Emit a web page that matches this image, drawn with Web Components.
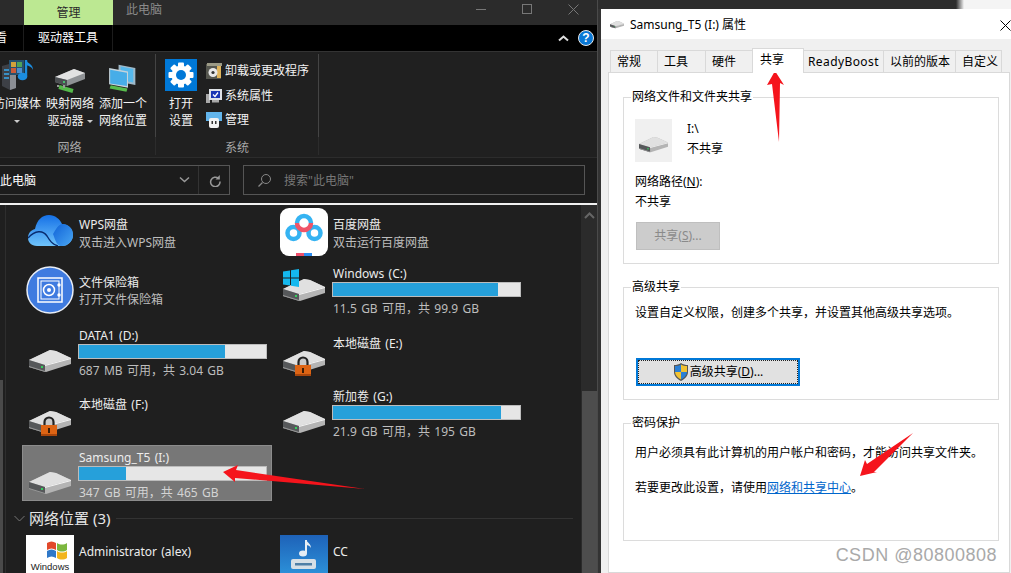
<!DOCTYPE html>
<html lang="zh">
<head>
<meta charset="utf-8">
<title>Samsung_T5 属性</title>
<style>
  html, body { margin: 0; height: 573px; overflow: hidden; background: #2d2d2d; }
  body { display: flex; font: 12px/16px "Noto Sans", "Noto Sans CJK SC", sans-serif; position: relative; }
  svg { display: block; }
</style>
</head>
<body>

<explorer-window>
  <ribbon-group slot="ribbon" label="网络" shift="-12" width="168" pad="5" label-shift="-2">
    <ribbon-btn>
      <svg slot="icon" width="34" height="34" viewBox="0 0 34 34">
        <path d="M2 7l14-4v26l-6 2-8-4z" fill="#3d4046"/><path d="M10 6l6-3v26l-6 2z" fill="#8b8e94"/>
        <path d="M4 11h5M4 15h5M4 19h5" stroke="#38a9ee" stroke-width="1.4"/>
        <rect x="9" y="1" width="15" height="15" fill="#27506e"/><rect x="11" y="3" width="5" height="5" fill="#d2a13b"/><rect x="17" y="3" width="5" height="5" fill="#4fa35b"/><rect x="11" y="9" width="5" height="5" fill="#c95a3a"/><rect x="17" y="9" width="5" height="5" fill="#4d8fce"/>
        <path d="M26 1v16" stroke="#1b8de0" stroke-width="2.4"/><path d="M26 1c2 4 7 4 7 10-1-3-4-4-7-5z" fill="#1b8de0"/><ellipse cx="22.5" cy="17.5" rx="4.8" ry="3.8" fill="#1b8de0"/>
      </svg>
      访问媒体<br><small-caret></small-caret>
    </ribbon-btn>
    <ribbon-btn>
      <svg slot="icon" width="34" height="34" viewBox="0 0 34 34">
        <g transform="translate(0 3)">
          <path d="M2 15L21 7l11 4v6L14 24 2 20z" fill="#8f9295"/><path d="M2 15L21 7l11 4-18 7z" fill="#e2e2e2"/><path d="M2 15l12 3v6L2 20z" fill="#4c4f52"/>
          <circle cx="11" cy="20" r="1" fill="#49e07a"/>
          <path d="M6 25l14 4" stroke="#55b94a" stroke-width="4"/><path d="M11 23v3M5 23v2" stroke="#999" stroke-width="2"/>
        </g>
      </svg>
      映射网络<br>驱动器 <small-caret></small-caret>
    </ribbon-btn>
    <ribbon-btn>
      <svg slot="icon" width="34" height="34" viewBox="0 0 34 34">
        <g transform="translate(1 4) scale(1.05 .85)">
          <path d="M11 2l16 4v20l-16-4z" fill="#9fb9c9"/><path d="M13 4l12 3v16l-12-3z" fill="#55b8ec"/>
          <path d="M2 6l18 4v19L2 25z" fill="#c5d3db"/><path d="M3 8l16 3.500v15.500L3 24z" fill="#47ade8"/>
          <path d="M3 28l16 4" stroke="#58bb4d" stroke-width="4"/>
        </g>
      </svg>
      添加一个<br>网络位置
    </ribbon-btn>
  </ribbon-group>

  <ribbon-group slot="ribbon" label="系统" width="163" pad="9">
    <ribbon-btn width="32">
      <svg slot="icon" width="32" height="32" viewBox="0 0 32 32">
        <rect width="32" height="32" fill="#0078d7"/>
        <g fill="#fff">
          <rect x="13" y="3.500" width="6" height="25" rx="1"/>
          <rect x="13" y="3.500" width="6" height="25" rx="1" transform="rotate(45 16 16)"/>
          <rect x="13" y="3.500" width="6" height="25" rx="1" transform="rotate(90 16 16)"/>
          <rect x="13" y="3.500" width="6" height="25" rx="1" transform="rotate(135 16 16)"/>
          <circle cx="16" cy="16" r="9.500"/>
        </g>
        <circle cx="16" cy="16" r="5" fill="#0078d7"/>
      </svg>
      打开<br>设置
    </ribbon-btn>
    <ribbon-list>
      <ribbon-small>
        <svg slot="icon" width="16" height="16" viewBox="0 0 16 16"><rect y="1" width="15" height="15" fill="#56574f"/><rect x="1" width="15" height="3" fill="#9c9a86"/><rect x="11" y="3" width="4" height="12" fill="#e0b45c"/><circle cx="7" cy="9.500" r="4.500" fill="#e8e8e8"/><circle cx="7" cy="9.500" r="1.600" fill="#333"/></svg>
        卸载或更改程序
      </ribbon-small>
      <ribbon-small>
        <svg slot="icon" width="16" height="16" viewBox="0 0 16 16"><rect x="0" y="6" width="4" height="9" fill="#a9a9a9"/><rect x="3" y="1" width="13" height="11" fill="#dfe3e8"/><rect x="5" y="3" width="9" height="7" fill="#1a36b4"/><path d="M7 6.500l2 2 3-4" stroke="#fff" stroke-width="1.300" fill="none"/><rect x="6" y="12" width="7" height="2.500" fill="#a9a9a9"/></svg>
        系统属性
      </ribbon-small>
      <ribbon-small>
        <svg slot="icon" width="16" height="16" viewBox="0 0 16 16"><rect width="16" height="9" fill="#62b5ec"/><rect x="3" y="6" width="10" height="10" rx="2" fill="#f2f2f2"/><rect x="5.500" y="9" width="1.500" height="3" fill="#333"/><rect x="9" y="9" width="1.500" height="3" fill="#333"/></svg>
        管理
      </ribbon-small>
    </ribbon-list>
  </ribbon-group>

  <tile-column slot="col1">
    <drive-tile name="WPS网盘" info="双击进入WPS网盘" h="59" text-top="10" icon-top="10">
      <svg slot="icon" width="45" height="31" viewBox="0 0 45 31" style="margin-left:2px">
        <defs><linearGradient id="c1" x1="0" y1="0" x2="0" y2="1"><stop offset="0" stop-color="#1570e6"/><stop offset="1" stop-color="#6fc4fb"/></linearGradient>
        <linearGradient id="c2" x1="0" y1="0" x2="1" y2="1"><stop offset="0" stop-color="#0f62d8"/><stop offset="1" stop-color="#49a6f2"/></linearGradient></defs>
        <path d="M9 31C3 31 0 27 0 23c0-5 3-8 7-9C9 5 14 0 21 0c6 0 11 4 13 9 6 0 11 4 11 11 0 6-5 11-11 11z" fill="url(#c1)"/>
        <path d="M34 9c6 0 11 4 11 11 0 6-5 11-11 11h-2c-4-2-5-7-7-12 3-5 5-9 9-10z" fill="url(#c2)"/>
        <path d="M0 23c7-8 15-8 19-2 3 5 5 8 11 10" stroke="#082b6e" stroke-width="1.400" fill="none"/>
      </svg>
    </drive-tile>
    <drive-tile name="文件保险箱" info="打开文件保险箱" h="59" text-top="9" line-gap="1" icon-top="2">
      <svg slot="icon" width="48" height="48" viewBox="0 0 48 48">
        <circle cx="24" cy="24" r="23" fill="#3f7be0" stroke="#e8edf6" stroke-width="1.500"/>
        <rect x="12" y="12" width="24" height="24" fill="none" stroke="#fff" stroke-width="1.500"/>
        <rect x="15" y="15" width="18" height="18" fill="none" stroke="#fff" stroke-width="1"/>
        <circle cx="23" cy="24" r="5.500" fill="none" stroke="#fff" stroke-width="1.500"/><circle cx="23" cy="24" r="2" fill="#fff"/>
        <circle cx="33" cy="19" r="1.700" fill="#fff"/><circle cx="33" cy="29" r="1.700" fill="#fff"/>
      </svg>
    </drive-tile>
    <drive-tile name="DATA1 (D:)" info="687 MB 可用，共 3.04 GB" used="78" h="69" icon-top="27"><drive-icon slot="icon"></drive-icon></drive-tile>
    <drive-tile name="本地磁盘 (F:)" h="53" icon-top="19"><drive-icon slot="icon" lock></drive-icon></drive-tile>
    <drive-tile name="Samsung_T5 (I:)" info="347 GB 可用，共 465 GB" used="25.300" h="56" icon-top="27" selected><drive-icon slot="icon"></drive-icon></drive-tile>
  </tile-column>

  <tile-column slot="col2">
    <drive-tile name="百度网盘" info="双击运行百度网盘" h="56" text-top="10" icon-top="3">
      <svg slot="icon" width="48" height="48" viewBox="0 0 48 48">
        <rect width="48" height="48" rx="9" fill="#fff"/>
        <g fill="none" stroke-width="4.500">
          <circle cx="13.500" cy="25" r="6" stroke="#35b3f2"/>
          <circle cx="34.500" cy="25" r="6" stroke="#35b3f2"/>
          <path d="M17 15a7 7 0 0 1 14 0" stroke="#35b3f2"/>
          <path d="M17 15a7 7 0 0 0 14 0" stroke="#ef5468"/>
        </g>
        <rect x="16" y="45" width="8" height="3" fill="#ef4f6b"/><rect x="24" y="45" width="8" height="3" fill="#2a8cf0"/>
      </svg>
    </drive-tile>
    <drive-tile name="Windows (C:)" info="11.5 GB 可用，共 99.9 GB" used="88.500" h="70" icon-top="18"><drive-icon slot="icon" windows></drive-icon></drive-tile>
    <drive-tile name="本地磁盘 (E:)" h="53" icon-top="20"><drive-icon slot="icon" lock></drive-icon></drive-tile>
    <drive-tile name="新加卷 (G:)" info="21.9 GB 可用，共 195 GB" used="90" h="56" icon-top="27"><drive-icon slot="icon"></drive-icon></drive-tile>
  </tile-column>

  <section-head slot="section">网络位置 (3)</section-head>

  <drive-tile slot="net1" name="Administrator (alex)" h="48" text-top="7" icon-top="0">
    <media-thumb slot="icon"></media-thumb>
  </drive-tile>
  <drive-tile slot="net2" name="CC" h="48" text-top="7" icon-top="0">
    <svg slot="icon" width="48" height="48" viewBox="0 0 48 48">
      <defs><linearGradient id="cc" x1="0" y1="0" x2="0" y2="1"><stop offset="0" stop-color="#1e62b8"/><stop offset="1" stop-color="#2f9be0"/></linearGradient></defs>
      <rect width="48" height="48" fill="url(#cc)"/>
      <path d="M26 5v13" stroke="#e6eef5" stroke-width="2"/><path d="M26 5c2 3 5 4 5 8-1-2-3-3-5-3z" fill="#e6eef5"/><ellipse cx="23" cy="18.500" rx="4" ry="3" fill="#e6eef5"/>
      <rect x="11" y="24" width="25" height="10" rx="2" fill="#d6dfe6"/><rect x="15" y="28" width="17" height="2.500" fill="#4f7fa6"/>
    </svg>
  </drive-tile>
</explorer-window>

<properties-dialog>
  <group-box legend="网络文件和文件夹共享" h="175">
    <share-state></share-state>
  </group-box>
  <group-box legend="高级共享" h="121">
    <dialog-text top="10">设置自定义权限，创建多个共享，并设置其他高级共享选项。</dialog-text>
    <dialog-button focused top="37" width="164">
      <svg slot="icon" width="16" height="18" viewBox="0 0 16 18"><path d="M8 0c2 1.500 4.500 2 7 2v7c0 4-3 7-7 9-4-2-7-5-7-9V2c2.500 0 5-.5 7-2z" fill="#555"/><path d="M8 1.500V9H2V3c2.200 0 4.200-.5 6-1.500z" fill="#2a7fd5"/><path d="M8 1.500c1.800 1 3.800 1.500 6 1.500v6H8z" fill="#f2c230"/><path d="M2 9h6v7.500C5 15 2.300 12.500 2 9z" fill="#f2c230"/><path d="M8 9h6c-.3 3.500-3 6-6 7.500z" fill="#2a7fd5"/></svg>
      高级共享(<u>D</u>)...
    </dialog-button>
  </group-box>
  <group-box legend="密码保护" h="126">
    <dialog-text top="14">用户必须具有此计算机的用户帐户和密码，才能访问共享文件夹。</dialog-text>
    <dialog-text top="19">若要更改此设置，请使用<a href="#">网络和共享中心</a>。</dialog-text>
  </group-box>
</properties-dialog>

<red-arrows></red-arrows>
<water-mark>CSDN @80800808</water-mark>

<script>
class ExplorerWindow extends HTMLElement {
  connectedCallback() {
    this.attachShadow({ mode: 'open' }).innerHTML = `
      <style>
        :host { display: flex; flex-direction: column; width: 597px; height: 573px; flex: none; background: #1f1f1f; border-right: 1px solid #4a4a4a; overflow: hidden; color: #fff; }
        .title { height: 25px; flex: none; display: flex; background: #2b2b2b; }
        .manage { margin-left: 24px; width: 89px; background: #bce892; color: #2b2b2b; text-align: center; line-height: 25px; }
        .here { margin-left: 13px; color: #8a8a8a; line-height: 20px; flex: 1; }
        .winbtns { display: flex; align-items: flex-start; gap: 35px; margin: 4px 18px 0 0; }
        .tabs { height: 26px; flex: none; display: flex; align-items: center; background: #000; border-bottom: 1px solid #333; }
        .tab { height: 26px; line-height: 26px; border-right: 1px solid #1c1c1c; box-sizing: border-box; }
        .tab.first { margin-left: -17px; width: 41px; }
        .tab.drive { padding-left: 14px; width: 89px; }
        .chev { margin-left: auto; margin-right: 9px; }
        .help { width: 14px; height: 14px; border-radius: 50%; background: #0a78d6; border: 1px solid #e8e8e8; color: #fff; font: bold 12px/14px "Liberation Sans", sans-serif; text-align: center; margin-right: 3px; }
        .ribbon { height: 106px; flex: none; display: flex; background: #202020; border-bottom: 1px solid #2c2c2c; box-sizing: border-box; }
        .addr { height: 45px; flex: none; display: flex; gap: 13px; padding: 7px 12px 8px 0; box-sizing: border-box; background: #1c1c1c; }
        .box { border: 1px solid #555; box-sizing: border-box; height: 30px; display: flex; align-items: center; }
        .box span { padding-top: 2px; }
        .path { width: 231px; margin-left: -1px; padding-right: 8px; }
        .path span { flex: 1; }
        .path i { width: 1px; height: 28px; background: #333; margin: 0 10px 0 8px; }
        .search { flex: 1; color: #777; padding-left: 13px; gap: 12px; }
        .white { height: 2px; flex: none; background: #f0f0f0; }
        .body { flex: 1; display: flex; min-height: 0; background: #1f1f1f; }
        .nav { width: 5px; flex: none; border-right: 1px solid #2e2e2e; padding-top: 175px; box-sizing: content-box; }
        .nav div { width: 3px; height: 200px; background: #4a4a4a; }
        .main { flex: 1; padding-left: 16px; min-width: 0; }
        .cols { display: flex; gap: 4px; }
        .net { display: flex; gap: 4px; margin-top: 8px; }
        .scroll { width: 16px; flex: none; background: #2b2b2b; display: flex; flex-direction: column; align-items: center; }
        .scroll .up { margin-top: 7px; }
        .scroll .thumb { margin-top: 172px; width: 15px; flex: 1; background: #4d4d4d; }
      </style>
      <div class="title">
        <div class="manage">管理</div>
        <div class="here">此电脑</div>
        <div class="winbtns">
          <svg width="11" height="11" viewBox="0 0 11 11"><path d="M0 5.500h10" stroke="#777"/></svg>
          <svg width="11" height="11" viewBox="0 0 11 11"><rect x=".5" y=".5" width="9" height="9" fill="none" stroke="#777"/></svg>
          <svg width="11" height="11" viewBox="0 0 11 11"><path d="M.5.500l10 10M10.500.500l-10 10" stroke="#777"/></svg>
        </div>
      </div>
      <div class="tabs">
        <div class="tab first">查看</div>
        <div class="tab drive">驱动器工具</div>
        <svg class="chev" width="11" height="8" viewBox="0 0 11 8"><path d="M1 6.500l4.500-4 4.500 4" fill="none" stroke="#ddd" stroke-width="2"/></svg>
        <div class="help">?</div>
      </div>
      <div class="ribbon"><slot name="ribbon"></slot></div>
      <div class="addr">
        <div class="box path">
          <span>此电脑</span>
          <svg width="11" height="8" viewBox="0 0 11 8"><path d="M1 1.500l4.500 4 4.500-4" fill="none" stroke="#999" stroke-width="1.500"/></svg>
          <i></i>
          <svg width="12" height="13" viewBox="0 0 12 13"><path d="M9.500 4.500A4.700 4.700 0 1 0 11 7.500" fill="none" stroke="#999" stroke-width="1.500"/><path d="M10.800 1v4.500H6.500z" fill="#999"/></svg>
        </div>
        <div class="box search">
          <svg width="15" height="15" viewBox="0 0 15 15"><circle cx="9" cy="6" r="4.500" fill="none" stroke="#888"/><path d="M5.500 9.500l-4 4" stroke="#888" stroke-width="1.300"/></svg>
          <span>搜索"此电脑"</span>
        </div>
      </div>
      <div class="white"></div>
      <div class="body">
        <div class="nav"><div></div></div>
        <div class="main">
          <div class="cols"><slot name="col1"></slot><slot name="col2"></slot></div>
          <slot name="section"></slot>
          <div class="net"><slot name="net1"></slot><slot name="net2"></slot></div>
        </div>
        <div class="scroll">
          <svg class="up" width="11" height="7" viewBox="0 0 11 7"><path d="M1 6l4.500-4.500L10 6" fill="none" stroke="#666" stroke-width="2"/></svg>
          <div class="thumb"></div>
        </div>
      </div>`;
  }
}

class RibbonGroup extends HTMLElement {
  connectedCallback() {
    const shift = this.getAttribute('shift') || 0;
    const pad = this.getAttribute('pad') || 0;
    const labelShift = this.getAttribute('label-shift') || 0;
    this.attachShadow({ mode: 'open' }).innerHTML = `
      <style>
        :host { display: block; flex: none; width: ${this.getAttribute('width')}px; margin-left: ${shift}px; box-sizing: border-box; padding-top: 2px; }
        .items { display: flex; gap: 5px; height: 83px; padding-left: ${pad}px; border-right: 1px solid #444; box-sizing: border-box; }
        .label { height: 18px; line-height: 22px; text-align: center; color: #a8a8a8; border-right: 1px solid #2c2c2c; box-sizing: border-box; }
        .label span { position: relative; left: ${labelShift}px; }
      </style>
      <div class="items"><slot></slot></div>
      <div class="label"><span>${this.getAttribute('label')}</span></div>`;
  }
}

class RibbonBtn extends HTMLElement {
  connectedCallback() {
    const w = this.getAttribute('width') || 48;
    this.attachShadow({ mode: 'open' }).innerHTML = `
      <style>
        :host { display: block; width: ${w}px; flex: none; text-align: center; color: #f2f2f2; line-height: 17px; padding-top: 3px; white-space: nowrap; }
        .icon { height: 35px; box-sizing: border-box; padding-top: 2px; display: flex; justify-content: center; margin-bottom: 3px; }
      </style>
      <div class="icon"><slot name="icon"></slot></div>
      <div><slot></slot></div>`;
  }
}

class RibbonList extends HTMLElement {
  connectedCallback() {
    this.attachShadow({ mode: 'open' }).innerHTML = `
      <style>:host { display: flex; flex-direction: column; gap: 8.5px; margin-left: 4px; padding-top: 9px; }</style>
      <slot></slot>`;
  }
}

class RibbonSmall extends HTMLElement {
  connectedCallback() {
    this.attachShadow({ mode: 'open' }).innerHTML = `
      <style>:host { display: flex; align-items: center; gap: 3px; height: 16px; color: #f2f2f2; white-space: nowrap; }</style>
      <slot name="icon"></slot><slot></slot>`;
  }
}

class SmallCaret extends HTMLElement {
  connectedCallback() {
    this.attachShadow({ mode: 'open' }).innerHTML = `
      <style>:host { display: inline-block; width: 0; height: 0; border: 3px solid transparent; border-top: 3px solid #ccc; border-bottom: 0; vertical-align: 2px; }</style>`;
  }
}

class TileColumn extends HTMLElement {
  connectedCallback() {
    this.attachShadow({ mode: 'open' }).innerHTML = `
      <style>:host { display: flex; flex-direction: column; width: 250px; height: 304px; flex: none; }</style>
      <slot></slot>`;
  }
}

class DriveTile extends HTMLElement {
  connectedCallback() {
    const name = this.getAttribute('name');
    const info = this.getAttribute('info');
    const used = this.getAttribute('used');
    const textTop = +(this.getAttribute('text-top') || 3) + 2;
    const iconTop = this.getAttribute('icon-top') || 0;
    const lineGap = used ? 4 : (this.getAttribute('line-gap') || 2);
    const sel = this.hasAttribute('selected');
    this.attachShadow({ mode: 'open' }).innerHTML = `
      <style>
        :host { display: flex; width: 250px; flex: none; height: ${this.getAttribute('h')}px; box-sizing: border-box; overflow: hidden; word-spacing: 1.2px; ${sel ? 'background: #777; box-shadow: inset 0 0 0 1px #8c8c8c;' : ''} }
        .icon { width: 57px; flex: none; box-sizing: border-box; padding: ${iconTop}px 0 0 4px; }
        .text { padding-top: ${textTop}px; flex: 1; min-width: 0; }
        .name { color: #ececec; white-space: nowrap; }
        .info { color: ${sel ? '#d4d4d4' : '#bdbdbd'}; margin-top: ${lineGap}px; white-space: nowrap; }
        .bar { width: 189px; height: 15px; margin: 0 0 0 -1px; box-sizing: border-box; border: 1px solid #bcbcbc; background: #e6e6e6; }
        .bar div { height: 100%; width: ${used}%; background: #26a0da; }
      </style>
      <div class="icon"><slot name="icon"></slot></div>
      <div class="text">
        <div class="name">${name}</div>
        ${used ? '<div class="bar"><div></div></div>' : ''}
        ${info ? `<div class="info">${info}</div>` : ''}
      </div>`;
  }
}

class DriveIcon extends HTMLElement {
  connectedCallback() {
    const lock = this.hasAttribute('lock');
    const win = this.hasAttribute('windows');
    const extra = lock ? `
      <path d="M15.500 14v-3a4.500 4.500 0 0 1 9 0v3" fill="#c9c9c9" stroke="#222" stroke-width="2.200"/>
      <rect x="12" y="14" width="16" height="11" fill="#dd6414"/><rect x="12" y="23" width="16" height="2" fill="#a8460c"/>
      <rect x="19" y="17" width="2" height="5" fill="#3a1c05"/>` : '';
    const flag = win ? `
      <g transform="translate(0 -10)" fill="#14b8ee"><path d="M0 2.500l7-1v7H0zM8 1.300l8-1.300v8.500H8zM0 9.500h7v7l-7-1zM8 9.500h8V18l-8-1.200z"/></g>` : '';
    this.attachShadow({ mode: 'open' }).innerHTML = `
      <style>:host { display: block; margin-left: 3px; } svg { display: block; overflow: visible; }</style>
      <svg width="${this.getAttribute('size') || 42}" viewBox="0 0 42 22">
        <path d="M0 10L21 0l6 1 15 7v6L17 22 0 17z" fill="#b4b4b4"/>
        <path d="M0 10L21 0l6 1 15 7-26 7z" fill="#e0e0e0"/>
        <path d="M0 10l16 5v7L0 17z" fill="#56585a"/>
        <path d="M0 16l16 5v1L0 17z" fill="#999"/>
        <path d="M16 15l26-7v1L16 16z" fill="#f5f5f5"/>
        <rect x="12" y="16" width="2" height="2" fill="#35d05e"/>
        ${extra}${flag}
      </svg>`;
  }
}

class MediaThumb extends HTMLElement {
  connectedCallback() {
    this.attachShadow({ mode: 'open' }).innerHTML = `
      <style>
        :host { display: block; width: 48px; height: 48px; background: #fff; color: #222; text-align: center; overflow: hidden; }
        svg { display: block; margin: 5px 0 0 20px; }
        div { font: 9.500px/10px "Liberation Sans", sans-serif; margin-top: 2px; white-space: nowrap; }
        div + div { font-size: 7px; line-height: 8px; margin-top: 0; }
      </style>
      <svg width="22" height="20" viewBox="0 0 22 20">
        <path d="M1 3c3-2 6-2 9 0v7c-3-2-6-2-9 0z" fill="#e2492b"/><path d="M11 3c3 2 7 2 10 0v7c-3 2-7 2-10 0z" fill="#7cb73f"/>
        <path d="M1 11c3-2 6-2 9 0v7c-3-2-6-2-9 0z" fill="#2f78c8"/><path d="M11 11c3 2 7 2 10 0v7c-3 2-7 2-10 0z" fill="#f2b51e"/>
      </svg>
      <div>Windows</div>
      <div>Media Player</div>`;
  }
}

class SectionHead extends HTMLElement {
  connectedCallback() {
    this.attachShadow({ mode: 'open' }).innerHTML = `
      <style>
        :host { display: flex; align-items: center; height: 18px; margin: 0 8px 0 -8px; color: #e6e6e6; font-size: 15px; line-height: 18px; }
        svg { flex: none; margin-right: 4px; }
        i { flex: 1; height: 1px; background: #333; margin-left: 6px; }
        span { white-space: nowrap; }
      </style>
      <svg width="11" height="7" viewBox="0 0 11 7"><path d="M.5 1l5 5 5-5" fill="none" stroke="#777"/></svg>
      <span><slot></slot></span><i></i>`;
  }
}

class PropertiesDialog extends HTMLElement {
  connectedCallback() {
    const tabs = [['常规', 48, 6], ['工具', 49, 6], ['硬件', 48, 6], ['共享', 52, 7, 1], ['ReadyBoost', 81, 4], ['以前的版本', 73, 6], ['自定义', 47, 6]];
    this.attachShadow({ mode: 'open' }).innerHTML = `
      <style>
        :host { display: flex; flex-direction: column; width: 413px; height: 573px; flex: none; color: #000; background: linear-gradient(to right, #2d2d2d 358px, #f4f4f4 366px) top / 100% 9px no-repeat, #333; }
        .win { margin: 9px 0 0 3px; flex: 1; display: flex; flex-direction: column; background: #f0f0f0; min-height: 0; }
        .head { height: 30px; flex: none; box-sizing: border-box; padding: 2px 0 0 9px; background: #fff; display: flex; align-items: center; gap: 6px; }
        .head svg { margin-left: auto; }
        .tabs { display: flex; margin: 9px 0 0 9px; height: 24px; align-items: flex-end; flex: none; position: relative; z-index: 1; }
        .tab { box-sizing: border-box; height: 22px; line-height: 21px; background: #f0f0f0; border: 1px solid #d9d9d9; border-bottom: 0; margin-right: -1px; white-space: nowrap; }
        .tab.on { height: 25px; margin-bottom: -1px; background: #fff; position: relative; }
        .tab.wide { letter-spacing: .4px; }
        .panel { flex: 1; margin-left: 7px; margin-right: 1px; background: #fff; border: 1px solid #d9d9d9; padding: 16px 10px 0 14px; display: flex; flex-direction: column; gap: 15px; min-height: 0; }
      </style>
      <div class="win">
        <div class="head">
          <drive-icon size="14" style="margin-left:0"></drive-icon>
          <span>Samsung_T5 (I:) 属性</span>
          <svg width="11" height="11" viewBox="0 0 11 11"><path d="M.5.500l10 10M10.500.500l-10 10" stroke="#000"/></svg>
        </div>
        <div class="tabs">
          ${tabs.map(t => `<div class="tab${t[3] ? ' on' : ''}${t[0] === 'ReadyBoost' ? ' wide' : ''}" style="width:${t[1]}px;padding-left:${t[2]}px">${t[0]}</div>`).join('')}
        </div>
        <div class="panel"><slot></slot></div>
      </div>`;
  }
}

class GroupBox extends HTMLElement {
  connectedCallback() {
    this.attachShadow({ mode: 'open' }).innerHTML = `
      <style>
        :host { display: block; width: 376px; height: ${this.getAttribute('h')}px; flex: none; }
        fieldset { margin: 0; height: 100%; box-sizing: border-box; border: 1px solid #dcdcdc; padding: 0 0 0 11px; display: block; }
        legend { padding: 0 1px; margin-left: -4px; line-height: 16px; }
      </style>
      <fieldset><legend>${this.getAttribute('legend')}</legend><slot></slot></fieldset>`;
  }
}

class ShareState extends HTMLElement {
  connectedCallback() {
    this.attachShadow({ mode: 'open' }).innerHTML = `
      <style>
        :host { display: block; padding-top: 14px; }
        .top { display: flex; gap: 15px; height: 43px; }
        .pic { width: 37px; height: 43px; background: #f0f0f0; display: flex; align-items: center; justify-content: center; padding-top: 8px; box-sizing: border-box; }
        .lines div + div { margin-top: 4px; }
        .lines { padding-top: 2px; }
        .path { margin-top: 12px; }
        .path div + div { margin-top: 4px; }
      </style>
      <div class="top">
        <div class="pic"><drive-icon size="29" style="margin-left:0"></drive-icon></div>
        <div class="lines"><div>I:\\</div><div>不共享</div></div>
      </div>
      <div class="path"><div>网络路径(<u>N</u>):</div><div>不共享</div></div>
      <dialog-button disabled top="12" width="84">共享(<u>S</u>)...</dialog-button>`;
  }
}

class DialogText extends HTMLElement {
  connectedCallback() {
    this.attachShadow({ mode: 'open' }).innerHTML = `
      <style>
        :host { display: block; margin-top: ${this.getAttribute('top') || 0}px; white-space: nowrap; }
        ::slotted(a) { color: #0066cc; }
      </style>
      <slot></slot>`;
  }
}

class DialogButton extends HTMLElement {
  connectedCallback() {
    const focused = this.hasAttribute('focused');
    this.attachShadow({ mode: 'open' }).innerHTML = `
      <style>
        :host { display: flex; align-items: center; justify-content: center; gap: 1px; box-sizing: border-box; height: 28px; width: ${this.getAttribute('width')}px; margin: ${this.getAttribute('top')}px 0 0 1px; white-space: nowrap;
          ${focused ? 'background: #e1e1e1; border: 2px solid #0078d7; outline: 1px dotted #222; outline-offset: -3px; color: #000;' : 'background: #cccccc; border: 1px solid #bfbfbf; color: #8a8a8a;'} }
      </style>
      <slot name="icon"></slot><span><slot></slot></span>`;
  }
}

class RedArrows extends HTMLElement {
  connectedCallback() {
    this.attachShadow({ mode: 'open' }).innerHTML = `
      <style>:host { position: absolute; inset: 0; pointer-events: none; } svg { display: block; }</style>
      <svg width="1011" height="573" viewBox="0 0 1011 573" fill="#f5141c">
        <path d="M775 71L784 85 780 83 779 142 772 84 767 85z"/>
        <path d="M860 476L865 460 867 464 913 433 874 472 877 472z"/>
        <path d="M223 472L238 465 236 470 365 489 235 478 235 482z"/>
      </svg>`;
  }
}

class WaterMark extends HTMLElement {
  connectedCallback() {
    this.attachShadow({ mode: 'open' }).innerHTML = `
      <style>:host { position: absolute; right: 14px; top: 543px; font: 18px/24px "Liberation Sans", sans-serif; color: #a9a9a9; letter-spacing: .5px; white-space: nowrap; }</style>
      <slot></slot>`;
  }
}

customElements.define('explorer-window', ExplorerWindow);
customElements.define('ribbon-group', RibbonGroup);
customElements.define('ribbon-btn', RibbonBtn);
customElements.define('ribbon-list', RibbonList);
customElements.define('ribbon-small', RibbonSmall);
customElements.define('small-caret', SmallCaret);
customElements.define('tile-column', TileColumn);
customElements.define('drive-tile', DriveTile);
customElements.define('drive-icon', DriveIcon);
customElements.define('media-thumb', MediaThumb);
customElements.define('section-head', SectionHead);
customElements.define('properties-dialog', PropertiesDialog);
customElements.define('group-box', GroupBox);
customElements.define('share-state', ShareState);
customElements.define('dialog-text', DialogText);
customElements.define('dialog-button', DialogButton);
customElements.define('red-arrows', RedArrows);
customElements.define('water-mark', WaterMark);
</script>
</body>
</html>
